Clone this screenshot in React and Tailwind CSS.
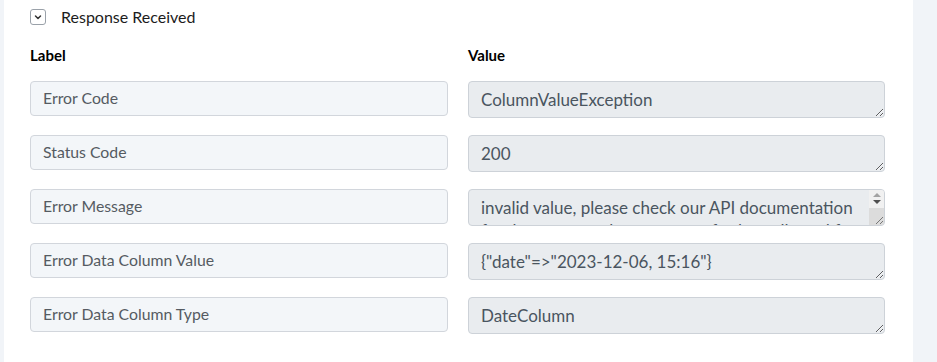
import { useState } from "react";

const rows = [
  { label: "Error Code", value: "ColumnValueException" },
  { label: "Status Code", value: "200" },
  {
    label: "Error Message",
    value:
      "invalid value, please check our API documentation for the correct value or range of values allowed for this column",
    scroll: true,
  },
  { label: "Error Data Column Value", value: '{"date"=>"2023-12-06, 15:16"}' },
  { label: "Error Data Column Type", value: "DateColumn" },
];

const App = () => {
  const [open, setOpen] = useState(true);

  return (
    <div className="flex h-[362px] w-[937px] bg-[#f1f4f8] font-['Lato',sans-serif] text-[#212529]">
      <div className="ml-[4px] w-[909px] bg-white px-[26px]">
        {/* Collapsible header */}
        <div className="flex h-[34px] items-center cursor-pointer" onClick={() => setOpen(!open)}>
          <span className="flex h-[16px] w-[16px] items-center justify-center rounded-[3px] border border-[#9aa1a9] bg-white">
            <svg width="10" height="10" viewBox="0 0 10 10" fill="none">
              <path d="M2.5 4 L5 6.5 L7.5 4" stroke="#333" strokeWidth="1.5" strokeLinecap="round" strokeLinejoin="round" />
            </svg>
          </span>
          <span className="ml-[15px] text-[16px] text-[#1c1c1c]">Response Received</span>
        </div>

        {open && (
          <div className="grid grid-cols-[418px_417px] gap-x-[20px]">
            <div className="pt-[10px] pb-[14px] text-[15px] font-bold text-black">Label</div>
            <div className="pt-[10px] pb-[14px] text-[15px] font-bold text-black">Value</div>
            {rows.map((row) => (
              <div key={row.label} className="contents">
                <div className="mb-[19px] flex h-[35px] items-center rounded-[4px] border border-[#d2d6dc] bg-[#f3f6f9] px-[12px] text-[15.8px] text-[#555b62]">
                  {row.label}
                </div>
                <div className="relative mb-[17px] h-[37px]">
                  <textarea
                    readOnly
                    rows={1}
                    value={row.value}
                    className={
                      row.scroll
                        ? "block h-[37px] w-full resize-none overflow-hidden rounded-[4px] border border-[#cdd2d8] bg-[#e9ecef] pl-[12px] pr-[28px] pt-[6px] text-[17px] leading-[23px] text-[#4a5560] outline-none"
                        : "block h-[37px] w-full resize-y rounded-[4px] border border-[#cdd2d8] bg-[#e9ecef] px-[12px] pt-[6px] text-[17px] leading-[23px] text-[#4a5560] outline-none"
                    }
                  />
                  {row.scroll && (
                    <div className="pointer-events-none absolute top-[1px] right-[1px] bottom-[1px] flex w-[15px] flex-col overflow-hidden rounded-r-[3px]">
                      <div className="flex h-[18px] flex-col items-center justify-center gap-[3px] bg-[#f1f1f1]">
                        <svg width="8" height="4" viewBox="0 0 8 4">
                          <path d="M0 4 L4 0 L8 4 Z" fill="#a3a3a3" />
                        </svg>
                        <svg width="8" height="4" viewBox="0 0 8 4">
                          <path d="M0 0 L8 0 L4 4 Z" fill="#505050" />
                        </svg>
                      </div>
                      <div className="relative flex-1 bg-[#dcdcdc]">
                        <svg className="absolute right-0 bottom-0" width="10" height="10" viewBox="0 0 10 10">
                          <path d="M9 2 L2 9 M9 6 L6 9" stroke="#777" strokeWidth="1" />
                        </svg>
                      </div>
                    </div>
                  )}
                </div>
              </div>
            ))}
          </div>
        )}
      </div>
    </div>
  );
};

export default App;
